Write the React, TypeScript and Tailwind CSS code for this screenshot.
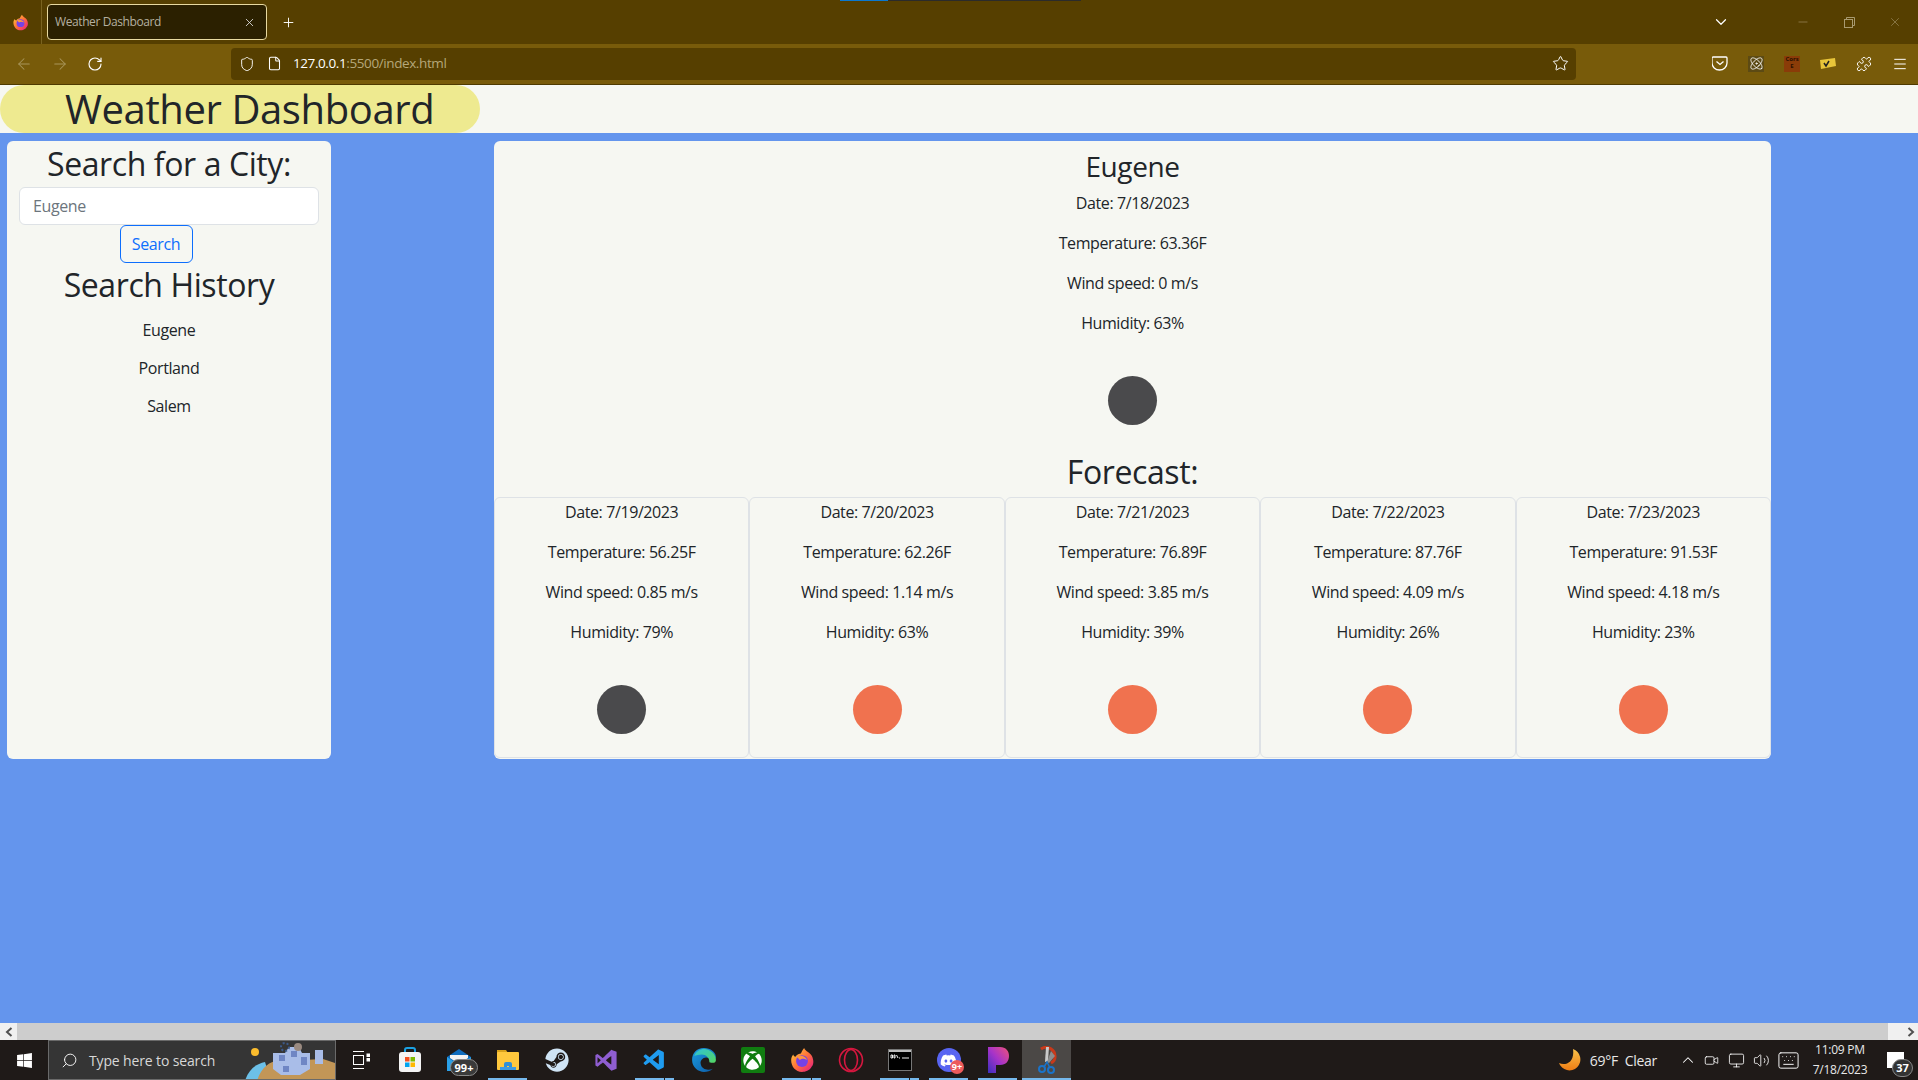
import React from "react";
import { ArrowLeft, ArrowRight, RotateCw, Shield, File, Star, Menu, Puzzle, ChevronDown, ChevronUp, X, Plus, Minus, Atom, Search, Volume2, Keyboard, Video, Monitor } from "lucide-react";
import { FaSteam, FaXbox, FaDiscord, FaWindows } from "react-icons/fa";
import { DiVisualstudio } from "react-icons/di";
import { VscVscode } from "react-icons/vsc";

const Firefox = ({ size = 20 }: { size?: number }) => (
  <svg width={size} height={size} viewBox="0 0 24 24">
    <defs>
      <linearGradient id="ff" x1="0" y1="0" x2="1" y2="1">
        <stop offset="0" stopColor="#ffd43b" />
        <stop offset="0.5" stopColor="#ff7139" />
        <stop offset="1" stopColor="#e31587" />
      </linearGradient>
    </defs>
    <path d="M14 1c1 3 5 4 7 7 2 4 2 8 0 10-2 4-6 5-9 5-6 0-10-5-10-11 0-2 1-4 2-5 0 1 1 2 2 2 1-2 4-3 5-3 1-2 2-4 3-5z" fill="url(#ff)" />
    <circle cx="12" cy="13" r="5.5" fill="#7542e5" />
    <path d="M7 9c3-2 8-1 10 3-2-1-5-2-7 0-1-1-2-2-3-3z" fill="#ff9640" />
  </svg>
);

const Edge = () => (
  <svg width="26" height="26" viewBox="0 0 24 24">
    <defs>
      <linearGradient id="eg" x1="0" y1="0" x2="1" y2="1">
        <stop offset="0" stopColor="#1b9de2" />
        <stop offset="1" stopColor="#0c59a4" />
      </linearGradient>
      <linearGradient id="eg2" x1="0" y1="0" x2="1" y2="1">
        <stop offset="0" stopColor="#2fc2d8" />
        <stop offset="1" stopColor="#54d660" />
      </linearGradient>
    </defs>
    <path d="M12 1C5 1 1 6 1 12c0 7 6 11 11 11 3 0 6-1 8-3-4 2-10 1-11-4-1-4 3-7 6-6 3 0 8 3 8-1C23 5 18 1 12 1z" fill="url(#eg)" />
    <path d="M3 8c2-5 7-7 11-6 5 1 9 5 9 10 0 3-3 3-6 2 0-4-3-7-7-7-3 0-5 1-7 1z" fill="url(#eg2)" />
  </svg>
);

const Store = () => (
  <svg width="24" height="26" viewBox="0 0 24 26">
    <path d="M7 6V3a2 2 0 0 1 2-2h6a2 2 0 0 1 2 2v3" fill="none" stroke="#1ba1e2" strokeWidth="2" />
    <rect x="1" y="5" width="22" height="20" rx="3" fill="#f4f4f4" />
    <rect x="7" y="10" width="4.5" height="4.5" fill="#f25022" />
    <rect x="12.5" y="10" width="4.5" height="4.5" fill="#7fba00" />
    <rect x="7" y="15.5" width="4.5" height="4.5" fill="#00a4ef" />
    <rect x="12.5" y="15.5" width="4.5" height="4.5" fill="#ffb900" />
  </svg>
);

const Mail = () => (
  <svg width="26" height="24" viewBox="0 0 26 24">
    <path d="M1 9 13 1l12 8v14H1z" fill="#0f6cbd" />
    <path d="M1 9l12 8 12-8v14H1z" fill="#2aa0e8" />
    <path d="M4 7h18v3l-9 6-9-6z" fill="#f3f3f3" />
  </svg>
);

const Explorer = () => (
  <svg width="24" height="22" viewBox="0 0 24 22">
    <path d="M1 1h9l2 3H1z" fill="#d9a21b" />
    <rect x="1" y="3" width="22" height="18" rx="1" fill="#ffc83d" />
    <path d="M8 21v-6a2 2 0 0 1 2-2h4a2 2 0 0 1 2 2v6h-3v-4h-2v4z" fill="#2f8fd8" />
    <rect x="4" y="18" width="16" height="3" fill="#3d9ae0" />
  </svg>
);

const Opera = () => (
  <svg width="26" height="26" viewBox="0 0 26 26" fill="none" stroke="#d6173f" strokeWidth="1.6">
    <circle cx="13" cy="13" r="11.5" />
    <ellipse cx="13" cy="13" rx="6.5" ry="10.5" />
  </svg>
);

const Cmd = () => (
  <svg width="24" height="22" viewBox="0 0 24 22">
    <rect x="0.5" y="0.5" width="23" height="21" fill="#000" stroke="#777" />
    <rect x="1" y="1" width="22" height="2" fill="#bdbdbd" />
    <path d="M3 6h1.5v3H3zM6 6h1v3H6zM8.5 6l1.5 3M11 9h1M14 9h7" stroke="#eee" strokeWidth="1" fill="none" />
  </svg>
);

const PIcon = () => (
  <svg width="22" height="26" viewBox="0 0 22 26">
    <defs>
      <linearGradient id="pg" x1="0" y1="1" x2="1" y2="0">
        <stop offset="0" stopColor="#3b2fc0" />
        <stop offset="0.5" stopColor="#a733c9" />
        <stop offset="1" stopColor="#f0527a" />
      </linearGradient>
    </defs>
    <path d="M1 0h12c6 0 9 4 9 9s-3 9-9 9H9v8H1z" fill="url(#pg)" />
  </svg>
);

const Snip = () => (
  <svg width="26" height="28" viewBox="0 0 26 28" fill="none">
    <path d="M7 3a9 9 0 0 1 14 8c0 3-2 5-4 6" stroke="#c8391a" strokeWidth="3" />
    <path d="M15 1l-1 14-3 1 1-15z" fill="#c9c9c9" />
    <path d="M17 5l4 5-6 7-2-1z" fill="#8d8d8d" />
    <circle cx="8" cy="23" r="3" stroke="#1a73c9" strokeWidth="2" />
    <circle cx="17" cy="24" r="3" stroke="#1a73c9" strokeWidth="2" />
    <path d="M10 21l3-5 3 6" stroke="#1a73c9" strokeWidth="1.5" />
  </svg>
);

const Cortana = () => (
  <svg width="90" height="40" viewBox="0 0 90 40" className="absolute right-0 top-0">
    <circle cx="10" cy="11" r="4" fill="#fbbc2d" />
    <path d="M0 40c3-10 10-17 20-19l6 19z" fill="#6cc0e8" />
    <path d="M12 40c4-14 14-22 26-20l40-2 12 4v18z" fill="#c29657" />
    <path d="M28 12h12l4-6h10l3 6h8v16l-10 6H36l-8-6z" fill="#a9bde8" />
    <path d="M34 14h6v6h-6zM46 10h6v6h-6zM56 16h6v8h-6zM38 25h6v6h-6z" fill="#6f86c4" />
    <circle cx="53" cy="6" r="4" fill="#9a8a80" />
    <circle cx="40" cy="6" r="4" fill="none" stroke="#3d5a8a" strokeWidth="2" strokeDasharray="2 2" />
    <path d="M70 9h8v14h-8z" fill="#a9bde8" />
  </svg>
);

const TaskItem = ({ children, line, active, split }: { children?: React.ReactNode; line?: boolean; active?: boolean; split?: boolean }) => (
  <div className={`relative w-[49px] h-full flex items-center justify-center ${active ? "bg-[#4b4846]" : ""}`}>
    {children}
    {line && (
      <div className={`absolute bottom-0 h-[2px] bg-[#76b9ed] ${active ? "left-0 right-0" : "left-[5px] right-[5px]"}`} />
    )}
    {split && <div className="absolute bottom-0 right-[14px] h-[2px] w-[1px] bg-[#1f1a18]" />}
  </div>
);

const Weather = ({ date, temp, wind, hum, dark }: { date: string; temp: string; wind: string; hum: string; dark: boolean }) => (
  <div className="flex flex-col items-center text-center">
    <p className="mb-4 leading-6">Date: {date}</p>
    <p className="mb-4 leading-6">Temperature: {temp}</p>
    <p className="mb-4 leading-6">Wind speed: {wind}</p>
    <p className="mb-4 leading-6">Humidity: {hum}</p>
    <div className="h-[98px] flex items-center justify-center">
      <div className={`w-[49px] h-[49px] rounded-full ${dark ? "bg-[#4a4a4c]" : "bg-[#f0724f]"}`} />
    </div>
  </div>
);

const forecast = [
  { date: "7/19/2023", temp: "56.25F", wind: "0.85 m/s", hum: "79%", dark: true },
  { date: "7/20/2023", temp: "62.26F", wind: "1.14 m/s", hum: "63%", dark: false },
  { date: "7/21/2023", temp: "76.89F", wind: "3.85 m/s", hum: "39%", dark: false },
  { date: "7/22/2023", temp: "87.76F", wind: "4.09 m/s", hum: "26%", dark: false },
  { date: "7/23/2023", temp: "91.53F", wind: "4.18 m/s", hum: "23%", dark: false },
];

export default function App() {
  return (
    <div className="h-screen w-full flex flex-col overflow-hidden bg-[#6495ed] text-[#212529] font-['Open_Sans',sans-serif] tracking-[-0.025em]">
      {/* Tab strip */}
      <div className="relative h-[44px] shrink-0 bg-[#563f00] flex items-center text-white">
        <div className="absolute top-0 left-[840px] h-[1px] w-[48px] bg-[#0a78d0]" />
        <div className="absolute top-0 left-[888px] h-[1px] w-[193px] bg-[#2b2b2b]" />
        <div className="w-[42px] h-full flex items-center justify-center border-r border-[#7a6320]">
          <Firefox size={17} />
        </div>
        <div className="ml-[5px] w-[220px] h-[36px] rounded-[4px] border border-[#e8d9a0] bg-[#2b2000] flex items-center justify-between pl-[7px] pr-[10px]">
          <span className="text-[12px] text-[#b5b0a0]">Weather Dashboard</span>
          <X size={13} strokeWidth={1.5} color="#e8e8e8" />
        </div>
        <div className="ml-[14px]"><Plus size={15} strokeWidth={1.5} /></div>
        <div className="ml-auto mr-[188px]"><ChevronDown size={18} strokeWidth={1.6} /></div>
        <div className="absolute right-0 top-0 h-[44px] w-[138px] flex text-[#a89a70]">
          <div className="w-[46px] flex items-center justify-center"><Minus size={14} strokeWidth={1} /></div>
          <div className="w-[46px] flex items-center justify-center">
            <svg width="11" height="11" viewBox="0 0 11 11" fill="none" stroke="currentColor"><rect x="0.5" y="2.5" width="8" height="8" /><path d="M2.5 2.5v-2h8v8h-2" /></svg>
          </div>
          <div className="w-[46px] flex items-center justify-center"><X size={14} strokeWidth={1} /></div>
        </div>
      </div>

      {/* Toolbar */}
      <div className="h-[41px] shrink-0 bg-[#785b0a] border-b border-[#4e3a00] flex items-center pb-[1px] text-white">
        <div className="ml-[15px] w-[18px]"><ArrowLeft size={18} strokeWidth={1.4} color="#a8955a" /></div>
        <div className="ml-[18px] w-[18px]"><ArrowRight size={18} strokeWidth={1.4} color="#a8955a" /></div>
        <div className="ml-[18px] w-[18px]"><RotateCw size={16} strokeWidth={1.7} /></div>
        <div className="ml-[126px] w-[1350px] h-[32px] rounded-[4px] bg-[#563f00] flex items-center">
          <Shield size={16} strokeWidth={1.4} className="ml-[8px]" />
          <File size={15} strokeWidth={1.7} className="ml-[12px]" />
          <span className="ml-[11px] text-[13.5px]">127.0.0.1<span className="text-[#b5a77a]">:5500/index.html</span></span>
          <Star size={17} strokeWidth={1.4} className="ml-auto mr-[7px]" />
        </div>
        <div className="ml-[126px] flex items-center">
          <div className="w-[36px] flex justify-center">
            <svg width="16" height="15" viewBox="0 0 16 15" fill="none" stroke="white" strokeWidth="1.3"><path d="M1.5 1h13a1 1 0 0 1 1 1v5a7.5 7 0 0 1-15 0V2a1 1 0 0 1 1-1z" transform="translate(-.5 0)" /><path d="M4.5 5.5 8 8.5l3.5-3" /></svg>
          </div>
          <div className="w-[36px] flex justify-center"><div className="w-[16px] h-[16px] bg-[#5c4a14] flex items-center justify-center"><Atom size={15} strokeWidth={1.4} /></div></div>
          <div className="w-[36px] flex justify-center">
            <div className="w-[16px] h-[16px] bg-[#8a3c08] text-[6px] leading-[7px] text-[#2a1000] text-center font-bold tracking-normal">Cors<br />E</div>
          </div>
          <div className="w-[36px] flex justify-center">
            <svg width="16" height="12" viewBox="0 0 16 12"><path d="M0 2l15-2 1 8-15 3z" fill="#e8c53a" /><path d="M4 5l2 3 3-5" stroke="#222" strokeWidth="1.5" fill="none" /></svg>
          </div>
          <div className="w-[36px] flex justify-center"><Puzzle size={16} strokeWidth={1.4} /></div>
          <div className="w-[36px] flex justify-center"><Menu size={16} strokeWidth={1.5} /></div>
        </div>
      </div>

      {/* Page */}
      <div className="flex-1 min-h-0 flex flex-col">
        <div className="h-[48px] shrink-0 bg-[#f6f7f2]">
          <div className="w-[480px] h-full rounded-full bg-[#eeea90] pl-[65px] flex items-center">
            <h1 className="text-[40px] leading-[48px] whitespace-nowrap">Weather Dashboard</h1>
          </div>
        </div>
        <div className="flex pt-[8px] pl-[7px] items-start">
          <aside className="w-[324px] h-[618px] rounded-[6px] bg-[#f6f7f2] flex flex-col items-center">
            <h2 className="text-[32px] leading-[46px]">Search for a City:</h2>
            <div className="w-[300px] h-[38px] rounded-[6px] border border-[#dee2e6] bg-white flex items-center px-[13px] text-[#6c757d]">Eugene</div>
            <button className="-ml-[26px] w-[73px] h-[38px] rounded-[6px] border border-[#0d6efd] text-[#0d6efd]">Search</button>
            <h2 className="text-[32px] leading-[38px] mt-[3px]">Search History</h2>
            <div className="mt-[14px] flex flex-col items-center">
              <p className="mb-[14px] leading-6">Eugene</p>
              <p className="mb-[14px] leading-6">Portland</p>
              <p className="leading-6">Salem</p>
            </div>
          </aside>
          <main className="ml-[163px] w-[1277px] h-[618px] rounded-[6px] bg-[#f6f7f2] flex flex-col items-center pt-[8px]">
            <h3 className="text-[28px] leading-[34px] mb-[8px]">Eugene</h3>
            <Weather date="7/18/2023" temp="63.36F" wind="0 m/s" hum="63%" dark />
            <h2 className="text-[32px] leading-[38px] mt-[4px] mb-[6px]">Forecast:</h2>
            <div className="w-full grid grid-cols-5">
              {forecast.map((f) => (
                <div key={f.date} className="border border-[#dee2e6] rounded-[6px] h-[261px] pt-[2px]">
                  <Weather {...f} />
                </div>
              ))}
            </div>
          </main>
        </div>
      </div>

      {/* Scrollbar */}
      <div className="h-[17px] shrink-0 bg-[#cdcdcd] flex justify-between">
        <div className="w-[17px] bg-[#f0f0f0] flex items-center justify-center text-[#505050]">
          <svg width="8" height="10" viewBox="0 0 8 10" fill="none" stroke="currentColor" strokeWidth="2"><path d="M6.5 1 2 5l4.5 4" /></svg>
        </div>
        <div className="w-[30px] bg-[#f0f0f0] flex items-center justify-end pr-[3px] text-[#505050]">
          <svg width="8" height="10" viewBox="0 0 8 10" fill="none" stroke="currentColor" strokeWidth="2"><path d="M1.5 1 6 5 1.5 9" /></svg>
        </div>
      </div>

      {/* Taskbar */}
      <div className="h-[40px] shrink-0 bg-[#1f1a18] flex items-center text-white tracking-normal">
        <div className="w-[48px] h-full flex items-center justify-center"><FaWindows size={17} /></div>
        <div className="relative w-[288px] h-full border border-[#6a6a6a] bg-[#353535] flex items-center overflow-hidden">
          <Search size={17} strokeWidth={1.3} className="ml-[12px] -scale-x-100" />
          <span className="ml-[11px] text-[14px] text-[#d8d8d8] tracking-[-0.01em]">Type here to search</span>
          <Cortana />
        </div>
        <TaskItem>
          <svg width="18" height="18" viewBox="0 0 18 18" fill="none" stroke="white" strokeWidth="1"><path d="M1 .5h11M1 17.5h11" /><rect x="1.5" y="4.5" width="10" height="9" /><rect x="15" y="3" width="2.5" height="2.5" fill="white" /><rect x="15" y="7.5" width="2.5" height="2.5" fill="white" /></svg>
        </TaskItem>
        <TaskItem><Store /></TaskItem>
        <TaskItem>
          <Mail />
          <div className="absolute left-[16px] top-[19px] w-[28px] h-[17px] rounded-full bg-[#3a3a3a] border border-[#888] text-[11px] font-bold leading-[15px] text-center">99+</div>
        </TaskItem>
        <TaskItem line><Explorer /></TaskItem>
        <TaskItem><FaSteam size={24} color="#cfe4f5" /></TaskItem>
        <TaskItem><DiVisualstudio size={30} color="#8f5ed1" /></TaskItem>
        <TaskItem line split><VscVscode size={25} color="#1f9cf0" /></TaskItem>
        <TaskItem><Edge /></TaskItem>
        <TaskItem>
          <div className="w-[24px] h-[26px] rounded-[2px] bg-[#107c10] flex items-center justify-center"><FaXbox size={19} color="white" /></div>
        </TaskItem>
        <TaskItem line split><Firefox size={26} /></TaskItem>
        <TaskItem><Opera /></TaskItem>
        <TaskItem line split><Cmd /></TaskItem>
        <TaskItem line>
          <div className="w-[24px] h-[24px] rounded-full bg-[#5865f2] flex items-center justify-center"><FaDiscord size={17} color="white" /></div>
          <div className="absolute left-[26px] top-[20px] w-[14px] h-[14px] rounded-full bg-[#ed5b5b] text-[9px] font-bold leading-[14px] text-center">9+</div>
        </TaskItem>
        <TaskItem line><PIcon /></TaskItem>
        <TaskItem line active><Snip /></TaskItem>
        <div className="ml-auto flex items-center h-full">
          <svg width="22" height="24" viewBox="0 0 22 24" className="mr-[9px]"><defs><linearGradient id="mn" x1="0" y1="0" x2="0" y2="1"><stop offset="0" stopColor="#f8c24a" /><stop offset="1" stopColor="#ef7d14" /></linearGradient></defs><path d="M14 1a11 11 0 1 1-14 14c6 3 16 0 14-14z" fill="url(#mn)" /></svg>
          <span className="text-[14px] text-[#e8e8e8] whitespace-nowrap tracking-[-0.02em]">69°F&nbsp;&nbsp;Clear</span>
          <ChevronUp size={18} strokeWidth={1.4} className="ml-[22px]" />
          <Video size={15} strokeWidth={1.3} className="ml-[7px]" />
          <Monitor size={17} strokeWidth={1.2} className="ml-[9px]" />
          <Volume2 size={17} strokeWidth={1.2} className="ml-[8px]" />
          <Keyboard size={23} strokeWidth={1} className="ml-[7px]" />
          <div className="ml-[11px] w-[58px] text-[12px] leading-[20px] text-center text-[#e8e8e8] tracking-[-0.02em]">
            <div>11:09 PM</div>
            <div>7/18/2023</div>
          </div>
          <div className="relative ml-[18px] mr-[14px] w-[17px] h-[16px] bg-white">
            <div className="absolute left-[5px] top-[7px] w-[21px] h-[18px] rounded-full bg-[#333] border border-[#888] text-[11px] font-bold leading-[16px] text-center">37</div>
          </div>
        </div>
      </div>
    </div>
  );
}
